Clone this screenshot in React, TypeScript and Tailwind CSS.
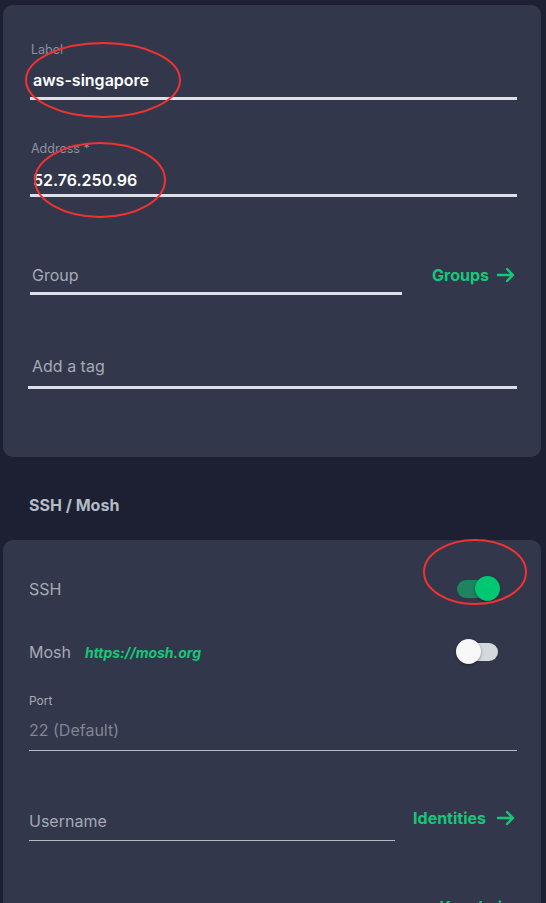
import React from "react";

function Arrow() {
  return (
    <svg width="20" height="16" viewBox="0 0 20 16" fill="none" stroke="#16c77a" strokeWidth="2.4" strokeLinecap="round" strokeLinejoin="round">
      <path d="M2 8h15M11 2l6 6-6 6" />
    </svg>
  );
}

function Toggle({ on }: { on: boolean }) {
  return (
    <div className="relative w-[42px] h-[20px]">
      <div className={`absolute left-0 top-[1px] w-[41px] h-[18px] rounded-full ${on ? "bg-[#1e8460]" : "bg-[#d3d9dd]"}`} />
      <div
        className={`absolute top-[-3px] w-[25px] h-[25px] rounded-full shadow-[0_1px_3px_rgba(0,0,0,0.4)] ${on ? "left-[18px] bg-[#00c872]" : "left-[-1px] bg-[#f8f8f8]"}`}
      />
    </div>
  );
}

export default function App() {
  return (
    <div
      className="relative w-[546px] h-[903px] overflow-hidden bg-[#1d2033] pt-[5px] px-[3px]"
      style={{ fontFamily: "Inter, 'Open Sans', sans-serif" }}
    >
      {/* Card 1 */}
      <div className="bg-[#33374b] rounded-[10px] w-[538px] h-[452px] pl-[27px] pr-[24px] pt-[38px]">
        <div className="text-[12.5px] leading-[14px] text-[#8b93a1] pl-[1px]">Label</div>
        <div className="text-[16px] leading-[20px] font-semibold text-white mt-[13px] pl-[3px]">aws-singapore</div>
        <div className="h-[3px] bg-[#dde1e6] mt-[7px]" />

        <div className="text-[12.5px] leading-[14px] text-[#8b93a1] mt-[42px] pl-[1px]">Address *</div>
        <div className="text-[16px] leading-[20px] font-semibold text-white mt-[14px] pl-[3px]">52.76.250.96</div>
        <div className="h-[3px] bg-[#dde1e6] mt-[4px]" />

        <div className="flex items-start mt-[68px]">
          <div className="w-[372px]">
            <div className="text-[16px] leading-[20px] text-[#a3abb6] pl-[2px]">Group</div>
            <div className="h-[3px] bg-[#dde1e6] mt-[7px]" />
          </div>
          <div className="flex-1 flex justify-end items-center gap-[7px] pr-[1px]">
            <span className="text-[16px] leading-[20px] font-bold text-[#16c77a]">Groups</span>
            <Arrow />
          </div>
        </div>

        <div className="-ml-[2px] mt-[61px]">
          <div className="text-[16px] leading-[20px] text-[#a3abb6] pl-[4px]">Add a tag</div>
          <div className="h-[3px] bg-[#dcdfe3] mt-[10px]" />
        </div>
      </div>

      <div className="h-[83px] pt-[12px] flex items-center pl-[26px]">
        <span className="text-[16px] font-bold text-[#b3bcc6]">SSH / Mosh</span>
      </div>

      {/* Card 2 */}
      <div className="bg-[#33374b] rounded-t-[10px] w-[538px] h-[400px] pl-[26px] pr-[24px] pt-[38px]">
        <div className="flex items-center justify-between h-[22px]">
          <span className="text-[16px] text-[#a3abb6]">SSH</span>
          <div className="mr-[18px]"><Toggle on /></div>
        </div>

        <div className="flex items-center justify-between h-[22px] mt-[41px]">
          <div className="flex items-baseline gap-[14px]">
            <span className="text-[16px] text-[#a3abb6]">Mosh</span>
            <span className="text-[14px] italic font-bold text-[#16c77a]">https://mosh.org</span>
          </div>
          <div className="mr-[18px]"><Toggle on={false} /></div>
        </div>

        <div className="text-[12px] leading-[14px] text-[#a3abb6] mt-[31px]">Port</div>
        <div className="text-[16px] leading-[20px] text-[#7f8694] mt-[12px]">22 (Default)</div>
        <div className="h-[1px] bg-[#b7bcc3] mt-[10px]" />

        <div className="flex items-start mt-[57px]">
          <div className="w-[366px]">
            <div className="text-[16px] leading-[20px] text-[#a3abb6] mt-[3px]">Username</div>
            <div className="h-[1px] bg-[#b7bcc3] mt-[9px]" />
          </div>
          <div className="flex-1 flex justify-end items-center gap-[10px] pr-[1px]">
            <span className="text-[16px] leading-[20px] font-bold text-[#16c77a]">Identities</span>
            <Arrow />
          </div>
        </div>

        <div className="flex justify-end mt-[56px] pr-[5px]">
          <span className="text-[16px] leading-[20px] font-bold text-[#16c77a]">Keychain</span>
        </div>
      </div>

      {/* annotation ellipses */}
      <svg className="absolute left-0 top-0 pointer-events-none" width="546" height="903" viewBox="0 0 546 903" fill="none">
        <ellipse cx="103" cy="80" rx="77" ry="37" stroke="#f03232" strokeWidth="2" />
        <ellipse cx="100" cy="180" rx="65" ry="37" stroke="#f03232" strokeWidth="2" />
        <ellipse cx="475" cy="572" rx="51" ry="32" stroke="#f03232" strokeWidth="2" />
      </svg>
    </div>
  );
}
